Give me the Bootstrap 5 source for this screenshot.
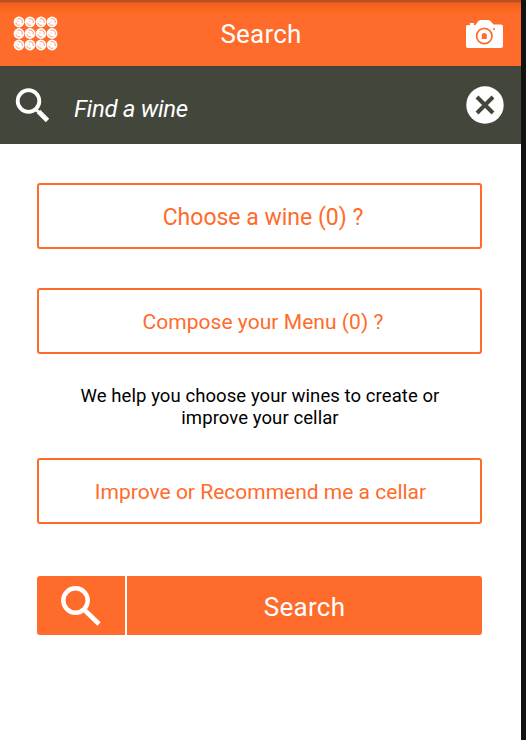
<!DOCTYPE html>
<html lang="en">
<head>
<meta charset="utf-8">
<meta name="viewport" content="width=device-width, initial-scale=1">
<title>Search</title>
<link href="https://cdn.jsdelivr.net/npm/bootstrap@5.3.0/dist/css/bootstrap.min.css" rel="stylesheet">
<style>
:root { --orange: #ff6b2b; --olive: #43463b; }
body { font-family: Roboto, "Liberation Sans", sans-serif; background: #fff; color: #000; overflow: hidden; }
.screen { height: 740px; border-right: 5px solid #121212; }
.topbar { height: 66px; padding: 1px 18px 0 13px; background: linear-gradient(#bb4d1d 0, #bf501d 2px, #ed601f 3px, #f9661f 8px, #ff6b24 13px, var(--orange) 18px); }
.topbar h1 { font-size: 26px; font-weight: 400; line-height: 30px; letter-spacing: .2px; padding: 1px 3px 0 0; }
.findbar { height: 78px; background: var(--olive); padding: 0 17px 0 15px; }
.find-field { font-size: 24px; font-style: italic; color: #fff; padding: 8px 0 0 24px; line-height: 28px; letter-spacing: -.32px; }
.find-field::placeholder { color: #fff; opacity: 1; }
.find-field:focus { outline: 0; }
.content { padding: 39px 39px 0 37px; }
.choice { height: 66px; border: 2px solid var(--orange); border-radius: 3px; color: var(--orange); padding: 2px 0 0 7px; line-height: 28px; background: #fff; }
.t-choose { font-size: 23px; letter-spacing: 0; padding-top: 4px; }
.t-compose { font-size: 21px; letter-spacing: .05px; }
.t-improve { font-size: 21px; letter-spacing: 0; padding-left: 2px; }
.hint { font-size: 18.5px; line-height: 22px; letter-spacing: .08px; margin: 31px 0 29px; padding-left: 1px; }
.go { height: 59px; margin-top: 52px; border-radius: 3px; background: var(--orange); color: #fff; font-size: 26px; letter-spacing: .3px; overflow: hidden; }
.go-icon { width: 90px; border-right: 2px solid #fff; }
.go-label { padding-top: 3px; }
svg { display: block; flex: none; }
</style>
</head>
<body>
<main class="screen d-flex flex-column">
  <header class="topbar d-flex align-items-center justify-content-between text-white">
    <svg width="46" height="36" viewBox="0 0 46 36" aria-label="Menu">
      <defs>
        <g id="cap">
          <circle r="5.4" fill="#fff"/>
          <path d="M-3.2 .8A3.2 3.2 0 0 0 1 3.1M-1.3-3.1A3.2 3.2 0 0 1 3.1 1" fill="none" stroke="#ff6b2b" stroke-width=".7"/>
          <path d="M-1.500-1.200L-.5 .2" stroke="#ff9a70" stroke-width=".7"/>
        </g>
      </defs>
      <use href="#cap" x="6" y="6"/><use href="#cap" x="17" y="6"/><use href="#cap" x="28" y="6"/><use href="#cap" x="39" y="6"/>
      <use href="#cap" x="6" y="17.5"/><use href="#cap" x="17" y="17.5"/><use href="#cap" x="28" y="17.5"/><use href="#cap" x="39" y="17.5"/>
      <use href="#cap" x="6" y="29"/><use href="#cap" x="17" y="29"/><use href="#cap" x="28" y="29"/><use href="#cap" x="39" y="29"/>
    </svg>
    <h1 class="m-0">Search</h1>
    <svg width="37" height="28" viewBox="0 0 37 28" aria-label="Camera">
      <path fill="#fff" d="M1.500 5H4V3H8V5H9.500L12 1.500Q13 0 15 0H22Q24 0 25 1.500L27.500 4.500H35Q37 4.500 37 6.500V26Q37 28 35 28H2Q0 28 0 26V6.500Q0 5 1.500 5Z"/>
      <circle cx="18.300" cy="16" r="7.700" fill="none" stroke="#ff6b2b" stroke-width="1.700"/>
      <path d="M15.800 19V15.500A2.500 2.500 0 0 1 20.800 15.500V19Z" fill="#ff6b2b"/>
      <circle cx="28" cy="9" r="1" fill="#ff6b2b"/>
    </svg>
  </header>
  <section class="findbar d-flex align-items-center">
    <svg width="35" height="35" viewBox="0 0 35 35" aria-hidden="true">
      <circle cx="13.500" cy="13" r="10.800" fill="none" stroke="#fff" stroke-width="3.800"/>
      <path d="M20.500 21L23.500 24" stroke="#fff" stroke-width="3"/>
      <path d="M23.500 23.500L32.500 32.500" stroke="#fff" stroke-width="4.800"/>
    </svg>
    <input class="find-field flex-grow-1 border-0 bg-transparent" type="text" placeholder="Find a wine" aria-label="Find a wine">
    <svg width="38" height="38" viewBox="0 0 38 38" aria-label="Clear">
      <circle cx="19" cy="19" r="18.700" fill="#fff"/>
      <path d="M11 11L27 27M27 11L11 27" stroke="#43463b" stroke-width="4"/>
    </svg>
  </section>
  <section class="content d-flex flex-column">
    <button class="choice t-choose w-100" type="button">Choose a wine (0) ?</button>
    <button class="choice t-compose w-100" type="button" style="margin-top:39px">Compose your Menu (0) ?</button>
    <p class="hint text-center">We help you choose your wines to create or<br>improve your cellar</p>
    <button class="choice t-improve w-100" type="button">Improve or Recommend me a cellar</button>
    <button class="go d-flex w-100 border-0 p-0" type="button">
      <span class="go-icon h-100 d-flex align-items-center justify-content-center">
        <svg width="40" height="40" viewBox="0 0 40 40" aria-hidden="true">
          <circle cx="14.500" cy="14.500" r="12.200" fill="none" stroke="#fff" stroke-width="4.400"/>
          <path d="M23.500 24L38 38" stroke="#fff" stroke-width="4.600"/>
        </svg>
      </span>
      <span class="go-label flex-grow-1 align-self-center">Search</span>
    </button>
  </section>
</main>
<script src="https://cdn.jsdelivr.net/npm/bootstrap@5.3.0/dist/js/bootstrap.bundle.min.js"></script>
</body>
</html>
